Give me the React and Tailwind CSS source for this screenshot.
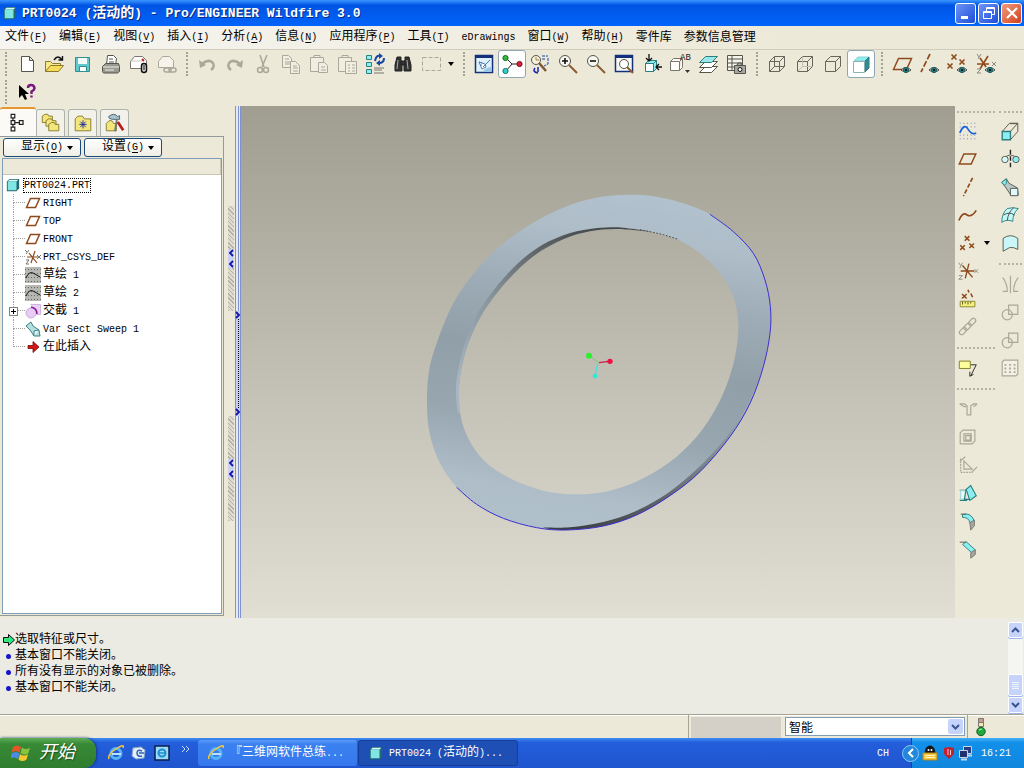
import { Fragment } from 'react'

const INK = '#55554c'
const DIM = '#aaa899'
const RUST = '#8e4a1c'
const AQUA = '#8ceef0'
const TEAL = '#2a7f80'

const Icon = ({ size = 'size-6', box = '0 0 24 24', children }) => (
    <svg
        viewBox={box}
        className={`${size} shrink-0`}
        fill="none"
        stroke={INK}
        aria-hidden="true"
    >
        {children}
    </svg>
)

// Latin runs are half the width of a Chinese character
const Txt = ({ children, latin = 'text-[10px]' }) =>
    children
        .split(/([\x20-\x7e]+)/)
        .filter(Boolean)
        .map((part, i) =>
            /^[\x20-\x7e]/.test(part) ? (
                <span key={i} className={`${latin} whitespace-pre`}>
                    {part}
                </span>
            ) : (
                <Fragment key={i}>{part}</Fragment>
            ),
        )

const Mnemonic = ({ letter }) => (
    <span className="text-[10px]">
        (<u className="underline-offset-2">{letter}</u>)
    </span>
)

const Eye = () => (
    <g>
        <path d="M11 18q5-5 10 0q-5 4-10 0z" fill="#e8f4f0" stroke="#444" />
        <circle cx="16" cy="18" r="2.6" fill={TEAL} stroke="#1d5f5f" />
        <circle cx="16" cy="18" r="1" fill="#000" stroke="none" />
    </g>
)

const Cross = ({ x, y, c = RUST }) => (
    <path
        d={`M${x - 2.5} ${y - 2.5}l5 5m0-5l-5 5`}
        stroke={c}
        strokeWidth="1.6"
    />
)

const Cube = ({ hidden }) => (
    <g stroke="#66665c">
        <path d="M4.5 9.5h10v10h-10zM4.5 9.5l5-5h10v10l-5 5M14.5 9.5l5-5" />
        {hidden && <path d="M9.5 4.5v10h10M9.5 14.5l-5 5" stroke={hidden} />}
    </g>
)

const CsysArms = () => (
    <g stroke={RUST} strokeWidth="1.5">
        <path d="M4 12h15M6 6l11 13M13 4l-4 16" />
        <path
            d="M2 3l2 3m2-3l-3 6M19 10l4 4m0-4l-4 4M2 17h4l-4 4h4"
            stroke="#8b8b84"
            strokeWidth="1"
        />
    </g>
)

const icons = {
    newFile: <path d="M7.5 4.5h8l4 4v11h-12zM15.5 4.5v4h4" fill="#fff" />,
    open: (
        <g>
            <path d="M3.5 19.5v-10h5l2 2h8v3" fill="#f7e98c" stroke="#8a7a2a" />
            <path d="M3.5 19.5l5-6h13l-5 6z" fill="#f5dc5a" stroke="#8a7a2a" />
            <path d="M12 8q4-6 8 0M20.5 4v4h-4" stroke="#111" strokeWidth="1.4" />
        </g>
    ),
    save: (
        <g>
            <path d="M5.5 5.5h14v14h-14z" fill="#5fc9cc" stroke="#2f8e92" />
            <path d="M8 6h9v6h-9z" fill="#f4fbfb" stroke="none" />
            <path d="M9.5 14.5h7v5h-7z" fill="#fff" stroke="#2f8e92" />
        </g>
    ),
    print: (
        <g>
            <path d="M8.5 13l1-9.5h6l3 3-1 7" fill="#fff" />
            <path d="M11 7h4M11 10h5" />
            <path d="M4.5 14.5l3-3h13l1 3v5l-2 1.5h-14l-1-1.5z" fill="#9a9a92" />
            <path d="M5 15h16M7 18h9" stroke="#efeee6" />
        </g>
    ),
    mail: (
        <g>
            <path d="M4.5 9.5l4-5h8l4 4v8h-16z" fill="#fff" stroke="#77776f" />
            <path d="M5 9h11" stroke="#c8c6ba" />
            <path d="M16 7l2 2" stroke="#c02020" strokeWidth="2" />
            <rect x="15.5" y="11.5" width="5" height="9" rx="2.5" fill="#ddd" stroke="#111" strokeWidth="1.5" />
            <path d="M18 13v5" stroke="#111" />
        </g>
    ),
    mailLink: (
        <g stroke={DIM}>
            <path d="M4.5 9.5l4-5h7l4 4v7h-15z" fill="#f5f3ea" />
            <rect x="10" y="16" width="7" height="4" rx="2" strokeWidth="1.5" />
            <rect x="15" y="16" width="7" height="4" rx="2" strokeWidth="1.5" />
        </g>
    ),
    undo: (
        <g stroke={DIM} strokeWidth="2.5">
            <path d="M7 12q5-5 10-2q4 4-1 8" />
            <path d="M4 8l1 8 6-3z" fill={DIM} strokeWidth="0" />
        </g>
    ),
    redo: (
        <g stroke={DIM} strokeWidth="2.5">
            <path d="M17 12q-5-5-10-2q-4 4 1 8" />
            <path d="M20 8l-1 8-6-3z" fill={DIM} strokeWidth="0" />
        </g>
    ),
    cut: (
        <g stroke={DIM} strokeWidth="1.5">
            <path d="M9 3l4 12M16 3l-5 12" />
            <circle cx="9" cy="18" r="2.5" />
            <circle cx="15" cy="18" r="2.5" />
        </g>
    ),
    copy: (
        <g stroke={DIM} fill="#f1eee1">
            <path d="M3.5 3.5h6l3 3v9h-9zM6 7h4M6 10h5M6 12h5" />
            <path d="M11.5 9.5h5l4 4v8h-9zM14 14h4M14 16h5M14 19h5" />
        </g>
    ),
    paste: (
        <g stroke={DIM} fill="#f1eee1">
            <path d="M3.5 5.5h13v14h-13zM7 5.5v-2h6v2z" />
            <path d="M11.5 10.5h6l3 3v7h-9zM14 15h4M14 18h5" />
        </g>
    ),
    pasteSpecial: (
        <g stroke={DIM} fill="#f1eee1">
            <path d="M3.5 5.5h13v14h-13zM7 5.5v-2h6v2z" />
            <path d="M10.5 9.5h11v12h-11zM13 13h2M17 13h3M13 16h2M17 16h3M13 19h2M17 19h3" />
        </g>
    ),
    regenerate: (
        <g>
            <path d="M3.5 3.5h5v4h-5zM3.5 10.5h5v4h-5zM3.5 17.5h5v4h-5z" fill={AQUA} stroke={TEAL} />
            <path d="M12 9q1-6 5-5M21 6q0 5-5 5" stroke="#1747a5" strokeWidth="2" />
            <path d="M16 1l4 3-4 3zM17 8v6l-4-3z" fill="#1747a5" stroke="none" />
            <path d="M11 16h10M11 18h8M11 21h10" stroke="#77776f" />
        </g>
    ),
    find: (
        <g fill="#333" stroke="#222">
            <path d="M6 5h4v3l1 3v8H4v-6zM14 5h4l2 8v6h-7v-8l1-3z" />
            <path d="M10 9h4v4h-4z" />
            <path d="M7 8l-1 9M16 8l1 9" stroke="#aaa" />
        </g>
    ),
    select: <path d="M3.5 5.5h18v13h-18z" stroke={DIM} strokeDasharray="4 2" />,
    repaint: (
        <g>
            <path d="M3.5 3.5h17v17h-17z" fill="#dff2fb" stroke="#13307e" strokeWidth="1.5" />
            <path d="M3 4h18v2H3z" fill="#13307e" stroke="none" />
            <path d="M11 20q1-4 8-5v5z" fill="#9cc8e8" stroke="none" />
            <path d="M11 15l7-7M7 10l6 2 1 3-4 2z" stroke="#4c7bb0" fill="#fff" />
            <path d="M7 10l3 1M8 13l2 0" stroke="#4c7bb0" />
        </g>
    ),
    spin: (
        <g>
            <path d="M6 6l6 6-6 7M12 12h7" stroke="#222" />
            <circle cx="5.5" cy="6" r="2.6" fill="#30b840" stroke="#14701f" />
            <circle cx="5.5" cy="19" r="2.6" fill="#30d0c8" stroke="#147070" />
            <circle cx="19.5" cy="12" r="2.6" fill="#d82036" stroke="#7c1020" />
        </g>
    ),
    orient: (
        <g>
            <circle cx="8" cy="8" r="4.5" fill="#f6f2dd" />
            <path d="M8 5v3h3" stroke="#a08040" />
            <path d="M11 11l7 8" stroke="#7d5a34" strokeWidth="2.5" />
            <path d="M14 4h6M14 7h4M20 6v6l-4 2" stroke="#1747a5" strokeDasharray="3 1" />
            <path d="M7 16q-3 4 3 5M10 15v5" stroke="#1c22b0" strokeWidth="1.5" />
        </g>
    ),
    zoomIn: (
        <g>
            <circle cx="9" cy="9" r="5.5" fill="#f9f8f0" />
            <path d="M13 13l8 8" stroke="#8a5c34" strokeWidth="2" />
            <path d="M6 9h6M9 6v6" stroke="#111" strokeWidth="1.6" />
        </g>
    ),
    zoomOut: (
        <g>
            <circle cx="9" cy="9" r="5.5" fill="#f9f8f0" />
            <path d="M13 13l8 8" stroke="#8a5c34" strokeWidth="2" />
            <path d="M6 9h6" stroke="#111" strokeWidth="1.6" />
        </g>
    ),
    refit: (
        <g>
            <path d="M3.5 3.5h17v16h-17z" fill="#f9f8f0" stroke="#13307e" strokeWidth="1.5" />
            <path d="M3 4h18v2H3z" fill="#13307e" stroke="none" />
            <circle cx="12" cy="12" r="4.5" fill="#fff" />
            <path d="M15 15l6 6" stroke="#8a5c34" strokeWidth="2" />
        </g>
    ),
    reorient: (
        <g>
            <path d="M5.5 11.5h8v8h-8z" fill="#fff" stroke={TEAL} />
            <path d="M5.5 11.5l3-3h8l-3 3zM13.5 11.5l3-3v8l-3 3z" fill={AQUA} stroke={TEAL} />
            <path d="M9 2v6M6 6l3 3 3-3M22 15h-5M19 12l-3 3 3 3" stroke="#111" strokeWidth="1.3" />
        </g>
    ),
    savedViews: (
        <g>
            <path d="M2.5 9.5h9v9h-9zM2.5 9.5l3-3h9l-3 3M14.5 6.5v9l-3 3" fill="#fffef8" stroke="#77776f" />
            <text x="12" y="8" fontSize="9" fill="#222" stroke="none">AB</text>
            <path d="M17 18h5l-2.5 3z" fill="#333" stroke="none" />
        </g>
    ),
    layers: (
        <g>
            <path d="M3.5 20.5l6-6h12l-6 6z" fill="#fff" />
            <path d="M3.5 15.5l6-6h12l-6 6z" fill="#fff" />
            <path d="M3.5 10.5l6-6h12l-6 6z" fill="#9be6e6" stroke={TEAL} />
        </g>
    ),
    viewMgr: (
        <g>
            <path d="M3.5 3.5h15v15h-15zM3.5 7h15M3.5 11h15M3.5 15h15M8 3.5v15" fill="#f7f5ea" />
            <path d="M10.5 13.5h11v8h-11zM13 13l1-2h3l1 2" fill="#a7a79f" />
            <circle cx="16" cy="17.5" r="2" fill="#fff" stroke="#111" />
        </g>
    ),
    wireframe: <Cube hidden="#66665c" />,
    hiddenLine: <Cube hidden="#c0beb0" />,
    noHidden: <Cube />,
    shaded: (
        <g>
            <path d="M5 9l4-4h11l-4 4z" fill={AQUA} stroke="#8fcfd0" />
            <path d="M16 9l4-4v11l-4 4z" fill="#2f8e92" stroke={TEAL} />
            <path d="M4.5 9.5h11v11h-11z" fill="#fff" stroke="#8fb0b0" />
        </g>
    ),
    planes: (
        <g>
            <path d="M3.5 17.5l5-11h13l-5 11z" stroke={RUST} strokeWidth="1.5" />
            <Eye />
        </g>
    ),
    axes: (
        <g>
            <path d="M12 2L3 20" stroke={RUST} strokeWidth="1.7" strokeDasharray="6 2" />
            <Eye />
        </g>
    ),
    points: (
        <g>
            <Cross x={8} y={5} />
            <Cross x={4} y={14} />
            <Cross x={16} y={10} />
            <Eye />
        </g>
    ),
    csys: (
        <g>
            <path d="M3 12h12M14 4L6 17M6 6l6 9" stroke={RUST} strokeWidth="1.6" />
            <path d="M3 2l2 3m2-3l-3 5M18 10l4 4m0-4l-4 4M3 17h4l-4 4h4" stroke="#8b8b84" />
            <Eye />
        </g>
    ),
    help: (
        <g>
            <path d="M5 5v13l3-3 3 5 2-1-2-5h4z" fill="#000" stroke="none" />
            <path d="M14 8q0-3 3-3t3.5 3q0 2-3 3.5v2.5M17.5 15.5v2" stroke="#7a1680" strokeWidth="2.4" />
        </g>
    ),
    sketch: (
        <g>
            <path d="M3 3.5h18M3 7.5h18M3 16.5h18M3 20.5h18" stroke="#5a78b0" strokeDasharray="1 3" />
            <path d="M3 14q5-11 9-4t9 4" stroke="#1660e0" strokeWidth="1.8" />
        </g>
    ),
    plane: <path d="M2.5 17.5l5-11h13l-5 11z" stroke={RUST} strokeWidth="1.6" />,
    axis: <path d="M17 2L7 22" stroke={RUST} strokeWidth="1.8" strokeDasharray="5 2" />,
    curve: <path d="M2 18q4-10 9-6q5 3 10-5" stroke={RUST} strokeWidth="1.8" />,
    point: (
        <g>
            <Cross x={11} y={7} />
            <Cross x={6} y={17} />
            <Cross x={16} y={15} />
        </g>
    ),
    coord: <CsysArms />,
    analysis: (
        <g>
            <Cross x={8} y={9} />
            <path d="M12 2l1 3M15 6l2 4" stroke={RUST} strokeWidth="1.7" />
            <path d="M3.5 14.5h16v6h-16z" fill="#f5f07a" stroke="#8a8430" />
            <path d="M6 15v3M9 15v2M12 15v3M15 15v2" stroke="#55521c" />
        </g>
    ),
    chain: (
        <g stroke={DIM} strokeWidth="1.3">
            <rect x="2" y="14" width="9" height="5" rx="2.5" transform="rotate(-45 6.5 16.5)" />
            <rect x="7" y="9" width="9" height="5" rx="2.5" transform="rotate(-45 11.5 11.5)" />
            <rect x="12" y="4" width="9" height="5" rx="2.5" transform="rotate(-45 16.5 6.5)" />
        </g>
    ),
    annotate: (
        <g>
            <path d="M2.5 4.5h12v8h-12z" fill="#ffff9c" stroke="#7a7a20" />
            <path d="M15 8.5h6l-6 12M14 16v5l4-2" stroke="#222" />
        </g>
    ),
    hole: <path d="M3 6.5h5l3 2v10h4v-10l3-2h4M3 6.5l5 3h2M22 6.5l-4 3" stroke={DIM} strokeWidth="1.3" />,
    shell: (
        <g stroke={DIM} strokeWidth="1.3">
            <path d="M3.5 7.5l3-3h13v12l-3 3h-13z" />
            <path d="M7.5 8.5h8v8h-8zM9.5 10.5h5v5h-5z" />
        </g>
    ),
    rib: (
        <g stroke={DIM} strokeWidth="1.3">
            <path d="M4 5v15h13" strokeDasharray="2 1" />
            <path d="M7.5 7.5v9h9zM9 3l-6 5M22 14l-6 6" />
        </g>
    ),
    draft: (
        <g stroke={TEAL} strokeWidth="1.2">
            <path d="M3 9h7l5-5M3 20h8" />
            <path d="M10 8l5-4 6 11-7 5z" fill={AQUA} />
            <path d="M4 9.5h5v9H4z" fill="#e4fbfb" stroke="#a8d4d4" />
            <path d="M10 8L8 19h6" />
        </g>
    ),
    round: (
        <g>
            <path d="M6 5q9-3 13 7l-5 2q-1-6-8-6z" fill={AQUA} stroke={TEAL} />
            <path d="M14 14l5-3v6l-4 5z" fill="#a7a79f" stroke="#77776f" />
            <path d="M4 4.5h6" />
        </g>
    ),
    chamfer: (
        <g>
            <path d="M6 7l4-3 10 9-4 3z" fill={AQUA} stroke={TEAL} />
            <path d="M15 16l5-3v5l-5 4z" fill="#a7a79f" stroke="#77776f" />
            <path d="M3 4.5h7" />
        </g>
    ),
    extrude: (
        <g>
            <path d="M3.5 12.5h9v9h-9z" fill={AQUA} stroke={TEAL} strokeWidth="1.5" />
            <path d="M3.5 12.5l8-9h9v9l-8 9M12.5 12.5l8-9M12 4h8" />
        </g>
    ),
    revolve: (
        <g>
            <path d="M12.5 2v20" stroke="#222" strokeWidth="1.5" strokeDasharray="5 2" />
            <circle cx="6.5" cy="12.5" r="3.5" fill="#d5fafa" />
            <circle cx="18.5" cy="12.5" r="3.5" fill={AQUA} />
            <path d="M8 9q4-3 9 0" />
        </g>
    ),
    sweep: (
        <g>
            <path d="M3 7l5-4 3 5 9 5 1 8h-8L7 12z" fill="#b9c9c9" />
            <path d="M3 7l5-4v5l-2 2z" fill={AQUA} stroke={TEAL} />
            <path d="M12.500 21.500v-8h8v8z" fill="#dcfbfb" />
        </g>
    ),
    boundary: (
        <g stroke={TEAL}>
            <path d="M3 20q0-10 6-15q6-2 12 0q-6 5-6 14q-6-3-12 1z" fill="#c4f8f8" />
            <path d="M9 18q1-9 7-14M5 12q6-4 12 0" fill="none" stroke="#444" />
        </g>
    ),
    fill: <path d="M4.5 7q8-6 16 0v12q-5-3-9-2l-7 4z" fill="#c9f6f7" stroke={INK} />,
    mirror: <path d="M12.5 3v19M4 5q5 6 5 15H4M21 5q-5 6-5 15h5" stroke={DIM} strokeWidth="1.3" />,
    merge: (
        <g stroke={DIM} strokeWidth="1.3">
            <path d="M10.5 4.5h10v10h-10z" />
            <circle cx="9" cy="15" r="5.5" />
        </g>
    ),
    pattern: (
        <g stroke={DIM} strokeWidth="1.3">
            <path d="M3.5 5.5l2-2h15v15l-2 2h-15z" fill="#f3f0e4" />
            <path d="M6 8.5h12M6 12.5h12M6 16.5h12" strokeWidth="2" strokeDasharray="2 3" />
        </g>
    ),
    treePlane: <path d="M1.5 12.5l4-9h9l-4 9z" stroke={RUST} strokeWidth="1.5" />,
    treeCsys: (
        <g>
            <path d="M2 8h11M4 4l8 10M10 2L6 14" stroke={RUST} strokeWidth="1.2" />
            <path d="M0 1l2 2m2-2L1 5M12 6l4 4M16 6l-4 4M1 11h3l-3 4h3" stroke="#77776f" />
        </g>
    ),
    treeSketch: (
        <g>
            <path d="M0 0h16v16H0z" fill="#b6b6b2" stroke="none" />
            <path d="M0 2.5h16M0 6.5h16M0 10.5h16M0 14.5h16" stroke="#666" strokeDasharray="1 2" />
            <path d="M1 11q3-7 7-5t7 4" stroke="#111" />
        </g>
    ),
    treeIntersect: (
        <g>
            <path d="M5.5 1.5h10v10h-4" fill="#e9d4f4" stroke="#d0b4e0" />
            <circle cx="6" cy="10" r="5" fill="#e9ccf4" stroke="#ccaadc" />
            <path d="M6 4q6 1 6 7" stroke="#8a1a9a" strokeWidth="1.6" />
        </g>
    ),
    treeSweep: (
        <g stroke="#3a7f84">
            <path d="M1 5l5-4 2 4 6 4 1 6H9L5 9z" fill="#b7dfe0" />
            <path d="M9 15v-5l5-1" fill="#f2fbfb" />
        </g>
    ),
    treeInsert: <path d="M3 6.5h5v-4l6 5.5-6 5.5v-4H3z" fill="#d01818" stroke="#7c0a0a" strokeWidth="0.8" />,
    part: (
        <g stroke="none">
            <path d="M1 4l3-3h11v11l-3 3H1z" fill="#25686c" />
            <path d="M2 4l2-2h10l-2 2z" fill="#d8ffff" />
            <path d="M2 4h10v10H2z" fill="#7fe6e4" />
        </g>
    ),
    ie: (
        <g>
            <circle cx="8" cy="8.5" r="5" stroke="#58b4f8" strokeWidth="3" />
            <path d="M4 9h9" stroke="#b7e2ff" strokeWidth="2" />
            <path d="M1 14Q-1 10 8 4t7-1" stroke="#f3c63a" strokeWidth="1.5" />
        </g>
    ),
}

const menus = [
    ['文件', 'F'],
    ['编辑', 'E'],
    ['视图', 'V'],
    ['插入', 'I'],
    ['分析', 'A'],
    ['信息', 'N'],
    ['应用程序', 'P'],
    ['工具', 'T'],
    ['eDrawings'],
    ['窗口', 'W'],
    ['帮助', 'H'],
    ['零件库'],
    ['参数信息管理'],
]

const toolGroups = [
    ['newFile', 'open', 'save', 'print', 'mail', 'mailLink'],
    ['undo', 'redo', 'cut', 'copy', 'paste', 'pasteSpecial', 'regenerate', 'find', 'select'],
    ['repaint', 'spin', 'orient', 'zoomIn', 'zoomOut', 'refit', 'reorient', 'savedViews', 'layers', 'viewMgr'],
    ['wireframe', 'hiddenLine', 'noHidden', 'shaded'],
    ['planes', 'axes', 'points', 'csys'],
]

const pressed = ['spin', 'shaded']

const datumGroups = [
    ['sketch', 'plane', 'axis', 'curve', 'point', 'coord', 'analysis', 'chain'],
    ['annotate'],
    ['hole', 'shell', 'rib', 'draft', 'round', 'chamfer'],
]

const featureGroups = [
    ['extrude', 'revolve', 'sweep', 'boundary', 'fill'],
    ['mirror', 'merge', 'merge', 'pattern'],
]

const tree = [
    ['treePlane', 'RIGHT'],
    ['treePlane', 'TOP'],
    ['treePlane', 'FRONT'],
    ['treeCsys', 'PRT_CSYS_DEF'],
    ['treeSketch', '草绘 1'],
    ['treeSketch', '草绘 2'],
    ['treeIntersect', '交截 1'],
    ['treeSweep', 'Var Sect Sweep 1'],
    ['treeInsert', '在此插入'],
]

const messages = [
    '选取特征或尺寸。',
    '基本窗口不能关闭。',
    '所有没有显示的对象已被删除。',
    '基本窗口不能关闭。',
]

const outer = [
    [660, 44], [740, 50], [830, 73], [900, 103], [970, 155], [1030, 220],
    [1065, 300], [1081, 380], [1080, 460], [1060, 560], [1020, 670], [960, 770],
    [870, 875], [780, 947], [680, 1005], [580, 1038], [470, 1050], [380, 1043],
    [280, 1015], [200, 973], [140, 922], [90, 850], [60, 765], [51, 680],
    [56, 580], [80, 490], [130, 370], [200, 270], [280, 190], [380, 122],
    [480, 75], [570, 51],
]

const inner = [
    [620, 145], [720, 155], [800, 178], [870, 220], [930, 280], [970, 350],
    [985, 430], [975, 530], [940, 640], [880, 745], [800, 830], [700, 895],
    [600, 932], [500, 943], [400, 932], [300, 895], [220, 840], [170, 765],
    [149, 690], [148, 610], [168, 510], [212, 410], [285, 310], [370, 229],
    [460, 178], [540, 154],
]

// Wall of the bore, seen at the upper left
const bore = [
    [720, 155], [620, 142], [540, 147], [460, 166], [370, 212], [282, 293],
    [205, 397], [160, 505], [139, 610], [142, 690], [149, 700], [149, 690],
    [148, 610], [168, 510], [212, 410], [285, 310], [370, 229], [460, 178],
    [540, 154], [620, 147],
]

// Outer wall, seen at the lower right
const rim = [
    [1068, 520], [1045, 600], [1004, 690], [940, 782], [860, 868], [775, 938],
    [680, 992], [580, 1026], [480, 1042], [400, 1043], [470, 1050], [580, 1038],
    [680, 1005], [780, 947], [870, 875], [960, 770], [1020, 670], [1060, 560],
]

// Catmull-Rom spline through the points
function smooth(pts, closed = true) {
    const n = pts.length
    const at = (i) =>
        closed ? pts[(i + n) % n] : pts[Math.max(0, Math.min(n - 1, i))]
    let d = `M${pts[0].join(' ')}`
    for (let i = 0; i < (closed ? n : n - 1); i++) {
        const [a, b, c, e] = [at(i - 1), at(i), at(i + 1), at(i + 2)]
        d += `C${b[0] + (c[0] - a[0]) / 6} ${b[1] + (c[1] - a[1]) / 6} ${c[0] - (e[0] - b[0]) / 6} ${c[1] - (e[1] - b[1]) / 6} ${c[0]} ${c[1]}`
    }
    return closed ? d + 'Z' : d
}

function TitleBar() {
    const button =
        'flex size-[21px] items-center justify-center rounded-[3px] border border-white'
    return (
        <header className="flex h-[26px] items-center bg-linear-to-b from-[#3a95ff] via-[#0054e3] via-20% to-[#0364fb] pr-[2px] pl-[3px]">
            <Icon size="size-3.5" box="0 0 16 16">{icons.part}</Icon>
            <h1 className="ml-[5px] flex-1 truncate text-sm font-bold text-white [text-shadow:1px_1px_#0a2a80]">
                <Txt latin="text-[13px]">
                    PRT0024 (活动的) - Pro/ENGINEER Wildfire 3.0
                </Txt>
            </h1>
            <div className="flex gap-[2px]">
                <button aria-label="最小化" className={`${button} bg-linear-to-br from-[#6d93f5] to-[#1c4bd8]`}>
                    <svg viewBox="0 0 16 16" className="size-4">
                        <path d="M3 11h7v3H3z" fill="#fff" />
                    </svg>
                </button>
                <button aria-label="还原" className={`${button} bg-linear-to-br from-[#6d93f5] to-[#1c4bd8]`}>
                    <svg viewBox="0 0 16 16" className="size-4" fill="none" stroke="#fff">
                        <path d="M5.5 6V2.5h8v7H11M2.5 6.5h8v7h-8zM2.5 7.5h8M5.5 3.5h8" />
                    </svg>
                </button>
                <button aria-label="关闭" className={`${button} bg-linear-to-br from-[#f09a7c] to-[#d03c14]`}>
                    <svg viewBox="0 0 16 16" className="size-4" stroke="#fff" strokeWidth="2.2">
                        <path d="M3 3l10 10M13 3L3 13" />
                    </svg>
                </button>
            </div>
        </header>
    )
}

const Grip = () => (
    <div className="flex w-[13px] shrink-0 justify-center">
        <div className="h-6 border-l-2 border-dotted border-[#a5a394]" />
    </div>
)

const DownArrow = () => (
    <span className="flex w-3 justify-center">
        <svg viewBox="0 0 6 4" className="h-1 w-1.5">
            <path d="M0 0h6L3 4z" />
        </svg>
    </span>
)

function Toolbar() {
    return (
        <div className="border-t border-[#d0cdbc] bg-[#ece9d8]">
            <div className="-ml-px flex h-7 items-center">
                {toolGroups.map((group, g) => (
                    <Fragment key={g}>
                        <Grip />
                        {group.map((name) => (
                            <button
                                key={name}
                                aria-label={name}
                                className={`flex size-7 shrink-0 items-center justify-center rounded-[3px] ${
                                    pressed.includes(name)
                                        ? 'border border-[#8fa6b4] bg-white'
                                        : ''
                                }`}
                            >
                                <Icon>{icons[name]}</Icon>
                            </button>
                        ))}
                        {g === 1 && <DownArrow />}
                    </Fragment>
                ))}
            </div>
            <div className="-ml-px flex h-7 items-center">
                <Grip />
                <button aria-label="help" className="flex size-7 items-center justify-center">
                    <Icon>{icons.help}</Icon>
                </button>
            </div>
        </div>
    )
}

const tabIcons = [
    <g key="tree" stroke="#222" strokeWidth="1.3">
        <path d="M4.5 2.5h4v4h-4zM4.5 9.5h4v4h-4zM4.5 16.5h4v4h-4zM13.5 9.5h4v4h-4zM8.5 11.5h5M6.5 6.5v3M6.5 13.5v3" fill="#fff" />
    </g>,
    <g key="folders" fill="#f2e67c" stroke="#85782c">
        <path d="M2.5 4.5l3-2h3l1 2h4v7h-11z" />
        <path d="M6.5 9.5l3-2h3l1 2h4v6h-11z" />
        <path d="M9.5 13.5l3-2h3l1 2h4v7h-11z" />
    </g>,
    <g key="favorites">
        <path d="M3.5 20.5v-13l3-3h5l2 3h7v13z" fill="#f2e67c" stroke="#85782c" />
        <path d="M12 9v9M8 13.5h8M9 10.5l6 6M15 10.5l-6 6" stroke="#1a2aa0" />
    </g>,
    <g key="tools">
        <path d="M2.5 20.5v-8l3-3h3l2 3h3v8z" fill="#f2e67c" stroke="#85782c" />
        <path d="M5 5q6-5 10 0l2-1v4H9L6 7z" fill="#a9c4cf" stroke="#44606c" />
        <path d="M14 8l-2 13" stroke="#777" strokeWidth="2" />
        <path d="M15 11l6 9" stroke="#b32020" strokeWidth="3" />
    </g>,
]

function ModelTree() {
    const drop =
        'flex h-[19px] w-[78px] items-center justify-end gap-px rounded-[3px] border border-[#1c4a78] bg-linear-to-b from-white to-[#efeee6] pr-1'
    return (
        <aside className="flex w-56 shrink-0 flex-col">
            <div className="flex h-[30px] items-end gap-[3px]">
                {tabIcons.map((drawing, i) => (
                    <button
                        key={i}
                        aria-label={drawing.key}
                        className={
                            i === 0
                                ? '-mr-[3px] flex h-[29px] w-9 items-center justify-center rounded-t-[3px] border-t-2 border-[#e6962c] bg-[#fbfaf7]'
                                : 'flex h-[27px] w-[29px] items-center justify-center rounded-t-[3px] border border-b-0 border-[#b0b4ae] bg-[#f3f2ea]'
                        }
                    >
                        <Icon size="size-[22px]">{drawing}</Icon>
                    </button>
                ))}
            </div>
            <div className="mb-[2px] flex flex-1 flex-col border border-l-0 border-[#919b9c] pr-px pb-px pl-[2px]">
                <div className="flex gap-[3px] py-px pl-px">
                    <button className={drop}>
                        <span>显示<Mnemonic letter="O" /></span>
                        <DownArrow />
                    </button>
                    <button className={drop}>
                        <span>设置<Mnemonic letter="G" /></span>
                        <DownArrow />
                    </button>
                </div>
                <div className="flex-1 border border-[#7f9db9] bg-white">
                    <div className="h-4 border-r border-b border-[#c9c6b4] bg-[#ece9d8]" />
                    <div className="mt-px flex h-[18px] items-center pl-[3px]">
                        <Icon size="size-3.5" box="0 0 16 16">{icons.part}</Icon>
                        <span className="ml-[3px] border border-dotted border-black leading-3">
                            <Txt>PRT0024.PRT</Txt>
                        </span>
                    </div>
                    <ul>
                        {tree.map(([icon, label], i) => (
                            <li key={label} className="relative flex h-[18px] items-center pl-[10px]">
                                <span className="flex h-full w-3 flex-col">
                                    <span className="h-1/2 border-b border-l border-dotted border-[#a0a09a]" />
                                    {i < tree.length - 1 && (
                                        <span className="h-1/2 border-l border-dotted border-[#a0a09a]" />
                                    )}
                                </span>
                                {icon === 'treeIntersect' && (
                                    <button aria-label="expand" className="absolute left-1.5 size-[9px] border border-[#848478] bg-white">
                                        <svg viewBox="0 0 7 7" className="size-[7px]" stroke="#000">
                                            <path d="M1 3.5h5M3.5 1v5" />
                                        </svg>
                                    </button>
                                )}
                                <Icon size="size-4" box="0 0 16 16">{icons[icon]}</Icon>
                                <span className="ml-[2px] whitespace-nowrap">
                                    <Txt>{label}</Txt>
                                </span>
                            </li>
                        ))}
                    </ul>
                </div>
            </div>
        </aside>
    )
}

const Chevron = ({ d }) => (
    <svg viewBox="0 0 6 8" className="h-2 w-1.5" fill="none" stroke="#1414a8" strokeWidth="1.8">
        <path d={d} />
    </svg>
)

const LEFT = 'M5 1L2 4l3 3'
const RIGHT = 'M1 1l3 3-3 3'

function Splitter() {
    const knob =
        'flex h-[105px] flex-col items-center justify-center bg-[repeating-linear-gradient(45deg,#b4b2a6_0_1px,#dedccf_1px_3px)]'
    return (
        <div className="flex w-[17px] shrink-0">
            <div className="flex w-[11px] flex-col gap-[105px] pt-[100px] pr-px pl-1">
                {[0, 1].map((i) => (
                    <div key={i} className={knob}>
                        <div className="flex flex-col gap-[3px] bg-[#ccd3f0]">
                            <Chevron d={LEFT} />
                            <Chevron d={LEFT} />
                        </div>
                    </div>
                ))}
            </div>
            <div className="flex w-1.5 flex-col border-x border-[#7f92cc] bg-[#e6e9f2]">
                <div className="mx-auto h-[205px] w-px bg-[#7f92cc]" />
                <div className="flex h-[105px] flex-col items-center justify-between bg-[#c3cdf0]">
                    <Chevron d={RIGHT} />
                    <div className="flex-1 border-l border-dotted border-black" />
                    <Chevron d={RIGHT} />
                </div>
                <div className="mx-auto w-px flex-1 bg-[#7f92cc]" />
            </div>
        </div>
    )
}

function Viewport() {
    return (
        <main className="flex min-w-0 flex-1 items-center bg-linear-to-b from-[#a09d91] to-[#e1dfd4]">
            <svg viewBox="-507 -222 2142 1536" className="h-auto w-full" fill="none">
                <defs>
                    <linearGradient id="face" gradientUnits="userSpaceOnUse" x1="640" y1="45" x2="480" y2="1045">
                        <stop offset="0" stopColor="#b1c1cd" />
                        <stop offset="0.12" stopColor="#aebdc8" />
                        <stop offset="0.3" stopColor="#9dacb6" />
                        <stop offset="0.5" stopColor="#919fa8" />
                        <stop offset="0.7" stopColor="#98a6b0" />
                        <stop offset="0.9" stopColor="#aebdc8" />
                        <stop offset="1" stopColor="#b0c0cb" />
                    </linearGradient>
                    <linearGradient id="bore" gradientUnits="userSpaceOnUse" x1="560" y1="150" x2="150" y2="620">
                        <stop offset="0" stopColor="#454a4c" />
                        <stop offset="0.3" stopColor="#646a6d" />
                        <stop offset="0.6" stopColor="#8a969e" />
                        <stop offset="1" stopColor="#a7b6c2" />
                    </linearGradient>
                    <linearGradient id="rim" gradientUnits="userSpaceOnUse" x1="500" y1="1045" x2="1010" y2="700">
                        <stop offset="0" stopColor="#3c4143" />
                        <stop offset="0.4" stopColor="#5c6265" />
                        <stop offset="1" stopColor="#9aa8b3" />
                    </linearGradient>
                </defs>
                <path d={smooth(outer) + smooth(inner)} fillRule="evenodd" fill="url(#face)" />
                <path d={smooth(bore)} fill="url(#bore)" />
                <path d="M690 149l30 6 40 9 45 14" stroke="#454a4c" strokeWidth="3" strokeDasharray="5 5" />
                <path d={smooth(rim)} fill="url(#rim)" />
                <path d={smooth(outer.slice(3, 21), false)} stroke="#3d2fd0" strokeWidth="3" />
                <path d="M565 548l-27-22" stroke="#7ec878" strokeWidth="3" />
                <path d="M567 548l30-4" stroke="#d81840" strokeWidth="4" />
                <path d="M563 550l-8 38" stroke="#4ce0d8" strokeWidth="4" />
                <circle cx="537" cy="527" r="9" fill="#2cf02c" />
                <circle cx="600" cy="544" r="8" fill="#ee1040" />
                <circle cx="555" cy="588" r="7" fill="#22ecdc" />
            </svg>
        </main>
    )
}

const IconColumn = ({ groups, width }) => (
    <div className={`flex flex-col ${width}`}>
        {groups.map((group, g) => (
            <Fragment key={g}>
                <div className={`flex shrink-0 items-center px-[2px] ${g ? 'h-[13px]' : 'h-[11px]'}`}>
                    <div className="w-full border-t-2 border-dotted border-[#b5b3a4]" />
                </div>
                {group.map((name, i) => (
                    <div key={i} className="flex h-7 shrink-0 items-center">
                        <button aria-label={name} className="flex w-[26px] shrink-0 justify-center">
                            <Icon size="size-[22px]">{icons[name]}</Icon>
                        </button>
                        {name === 'point' && <DownArrow />}
                    </div>
                ))}
            </Fragment>
        ))}
    </div>
)

function Messages() {
    const scroll =
        'flex w-[15px] items-center justify-center rounded-[2px] border border-white bg-[#c6d4fc] shadow-[0_1px_0_#9db4ea]'
    return (
        <section className="flex bg-[#ebebe4]">
            <ul className="flex-1 pt-[14px] pb-[18px] pl-[3px]">
                {messages.map((text, i) => (
                    <li key={i} className="flex h-4 items-center">
                        {i === 0 ? (
                            <svg viewBox="0 0 12 12" className="size-3" fill="#2ee884" stroke="#111">
                                <path d="M.5 3.5h5v-3l6 5.5-6 5.5v-3h-5z" />
                            </svg>
                        ) : (
                            <span className="mr-1 ml-[3px] size-[5px] rounded-full bg-[#1414c8]" />
                        )}
                        <span>{text}</span>
                    </li>
                ))}
            </ul>
            <div className="mt-1 mr-px flex flex-col bg-[#f5f5f1]">
                <button aria-label="up" className={`${scroll} h-4`}>
                    <svg viewBox="0 0 9 6" className="w-[9px]" fill="none" stroke="#3d5690" strokeWidth="2">
                        <path d="M1 5l3.5-3.5L8 5" />
                    </svg>
                </button>
                <div className="flex-1" />
                <div className={`${scroll} h-[22px] flex-col gap-px`}>
                    {[0, 1, 2, 3].map((i) => (
                        <span key={i} className="h-px w-[7px] bg-[#eef4fe]" />
                    ))}
                </div>
                <button aria-label="down" className={`${scroll} mt-px mb-px h-4`}>
                    <svg viewBox="0 0 9 6" className="w-[9px]" fill="none" stroke="#3d5690" strokeWidth="2">
                        <path d="M1 1l3.5 3.5L8 1" />
                    </svg>
                </button>
            </div>
        </section>
    )
}

function StatusBar() {
    return (
        <section className="flex h-6 border-t border-[#a5a394] bg-[#ece9d8] shadow-[inset_0_1px_#fff]">
            <div className="flex-1 border-r border-[#a5a394]" />
            <div className="mt-[2px] ml-[2px] w-[90px] bg-[#d4d0c8]" />
            <label className="relative my-[2px] ml-1 flex w-[180px]">
                <span className="sr-only">过滤器</span>
                <select className="w-full appearance-none border border-[#7f9db9] bg-white pl-[3px] font-['Noto_Sans_CJK_SC',sans-serif] text-xs leading-4">
                    <option>智能</option>
                </select>
                <span className="pointer-events-none absolute inset-y-[2px] right-[2px] flex w-[15px] items-center justify-center rounded-[2px] bg-[#c6d4fc]">
                    <svg viewBox="0 0 9 6" className="w-[9px]" fill="none" stroke="#3d5690" strokeWidth="2">
                        <path d="M1 1l3.5 3.5L8 1" />
                    </svg>
                </span>
            </label>
            <div className="ml-[2px] flex w-[57px] items-center border-l border-[#a5a394] pl-2">
                <svg viewBox="0 0 10 20" className="h-5 w-2.5" stroke="#777">
                    <path d="M2.5 1.5h5v4h-5z" fill="#c99a90" />
                    <path d="M2.5 5.5h5v4h-5z" fill="#f5e9b0" />
                    <circle cx="5" cy="14.5" r="4.2" fill="#22a83c" stroke="#125c20" />
                    <path d="M3 13l3-1" stroke="#b5f5b5" />
                </svg>
            </div>
        </section>
    )
}

function Taskbar() {
    return (
        <footer className="flex h-[30px] items-stretch bg-linear-to-b from-[#3f8cf3] via-[#245edb] via-15% to-[#1f55cf] text-white">
            <button className="flex w-24 items-center rounded-r-xl bg-linear-to-b from-[#5eac56] via-[#388a36] via-20% to-[#2f7d2e] pl-[11px] text-lg italic shadow-[1px_0_3px_#123a80] [text-shadow:1px_1px_1px_#1b4a1b]">
                <svg viewBox="0 0 20 18" className="mr-2 h-[18px] w-5">
                    <path d="M2 3q4-3 8 0L8.5 8.5q-4-3-8 0z" fill="#e8542a" />
                    <path d="M11 3.5q4 3 8 0L17.5 9q-4 3-8 0z" fill="#86c440" />
                    <path d="M.5 9.5q4-3 8 0L7 15q-4-3-8 0z" fill="#4a8be8" />
                    <path d="M9 10q4 3 8 0l-1.5 5.5q-4 3-8 0z" fill="#f5c832" />
                </svg>
                开始
            </button>
            <div className="flex w-[102px] items-center gap-[7px] pl-3">
                <button aria-label="Internet Explorer">
                    <Icon size="size-4" box="0 0 16 16">{icons.ie}</Icon>
                </button>
                <button aria-label="Outlook">
                    <Icon size="size-4" box="0 0 16 16">
                        <path d="M2 3l8-1 4 3-1 8-8 1-4-3z" fill="#e6eef8" stroke="#8aa8cc" />
                        <path d="M11 6q-5-2-5 2t5 3M8 8h5M12 3l3-1" stroke="#2a62b8" strokeWidth="1.5" />
                    </Icon>
                </button>
                <button aria-label="Desktop">
                    <Icon size="size-4" box="0 0 16 16">
                        <path d="M1 1h14v14H1z" fill="#9adcf5" stroke="#0a1c50" strokeWidth="1.5" />
                        <circle cx="8" cy="8" r="3.5" stroke="#1f8ecf" strokeWidth="2" />
                        <path d="M5 8h6" stroke="#1f8ecf" strokeWidth="1.5" />
                    </Icon>
                </button>
                <svg viewBox="0 0 8 6" className="mb-2 ml-1 h-1.5 w-2" fill="none" stroke="#c5dcff">
                    <path d="M1 0l3 3-3 3M5 0l3 3-3 3" />
                </svg>
            </div>
            <div className="flex flex-1 items-center gap-px py-[2px]">
                <button className="flex h-full w-[159px] items-center gap-[6px] rounded-[3px] bg-linear-to-b from-[#5b9bfb] via-[#3c81f0] via-15% to-[#3578ee] pl-[10px]">
                    <Icon size="size-4" box="0 0 16 16">{icons.ie}</Icon>
                    <span className="whitespace-nowrap"><Txt>『三维网软件总练...</Txt></span>
                </button>
                <button className="flex h-full w-[160px] items-center gap-[6px] rounded-[3px] border border-[#173f96] bg-[#1d4fb4] pl-[10px]">
                    <Icon size="size-3.5" box="0 0 16 16">{icons.part}</Icon>
                    <span className="whitespace-nowrap"><Txt>PRT0024 (活动的)...</Txt></span>
                </button>
            </div>
            <div className="flex items-center pr-[13px]">
                <span><Txt>CH</Txt></span>
            </div>
            <div className="relative z-10 -mr-2 flex items-center">
                <button aria-label="show icons" className="flex size-[17px] items-center justify-center rounded-full border border-[#8cc8fa] bg-[#2387dc]">
                    <svg viewBox="0 0 8 10" className="h-2.5 w-2" fill="none" stroke="#fff" strokeWidth="2">
                        <path d="M6 1L2 5l4 4" />
                    </svg>
                </button>
            </div>
            <div className="flex w-[113px] items-center border-l border-[#0c4a9c] bg-linear-to-b from-[#3fb0f8] via-[#1290e9] via-15% to-[#0f86de] pl-[10px]">
                <Icon size="size-4" box="0 0 16 16">
                    <path d="M3 10q0-9 5-9t5 9z" fill="#151515" stroke="#111" />
                    <circle cx="6.5" cy="5" r="1" fill="#fff" stroke="none" />
                    <circle cx="9.5" cy="5" r="1" fill="#fff" stroke="none" />
                    <path d="M1 8h14v7H1z" fill="#f8c83c" stroke="#b88410" />
                    <path d="M3 10.5h10M3 12.5h10" stroke="#fff3c0" />
                </Icon>
                <svg viewBox="0 0 10 12" className="ml-1.5 h-3 w-2.5">
                    <path d="M0 1l5-1 5 1v6l-5 5-5-5z" fill="#c42030" />
                    <path d="M4 2v6M6.5 3v5" stroke="#f2c8c8" />
                </svg>
                <svg viewBox="0 0 16 16" className="ml-1 size-4" stroke="#c8d4e8">
                    <path d="M5.5 1.5h8v7h-8z" fill="#2a3c80" />
                    <path d="M1.5 5.5h8v7h-8z" fill="#20306c" />
                    <path d="M3 14.5h6M10 10.5h4" strokeWidth="2" />
                </svg>
                <time className="ml-[7px]"><Txt>16:21</Txt></time>
            </div>
        </footer>
    )
}

export default function App() {
    return (
        <div className="flex min-h-screen flex-col overflow-hidden bg-[#ece9d8] font-['Liberation_Mono','Noto_Sans_CJK_SC',monospace] text-xs leading-4 text-black">
            <TitleBar />
            <nav className="flex h-[23px] items-center gap-3 bg-linear-to-r from-[#f6f5f1] to-[#ece9d8] to-80% pl-[5px]">
                {menus.map(([label, letter]) => (
                    <button key={label} className="shrink-0 whitespace-nowrap">
                        <Txt>{label}</Txt>
                        {letter && <Mnemonic letter={letter} />}
                    </button>
                ))}
            </nav>
            <Toolbar />
            <div className="flex flex-1">
                <ModelTree />
                <Splitter />
                <Viewport />
                <div className="flex w-[69px] shrink-0">
                    <IconColumn groups={datumGroups} width="w-[42px]" />
                    <IconColumn groups={featureGroups} width="w-[27px]" />
                </div>
            </div>
            <Messages />
            <StatusBar />
            <Taskbar />
        </div>
    )
}
